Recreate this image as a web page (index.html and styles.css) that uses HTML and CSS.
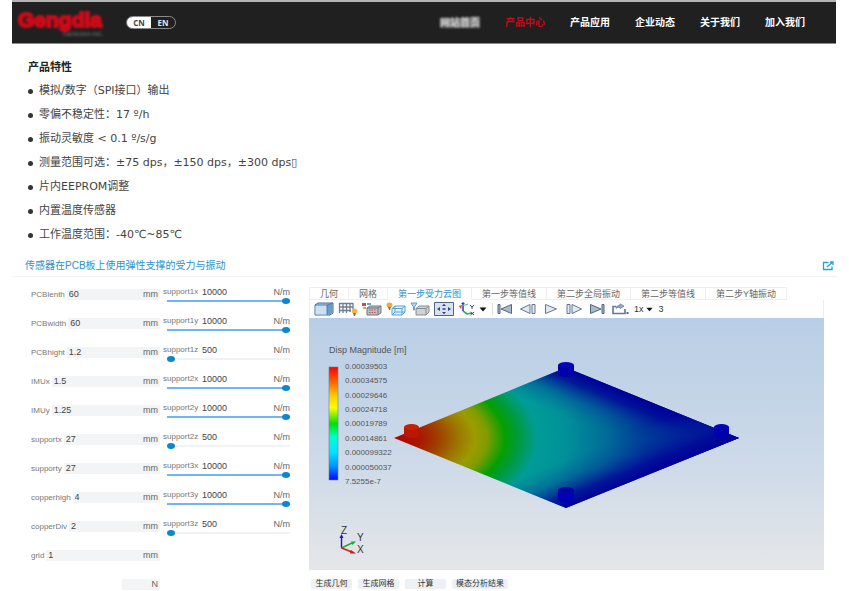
FILE: index.html
```html
<!DOCTYPE html>
<html lang="zh-CN">
<head>
<meta charset="utf-8">
<title>产品中心</title>
<link rel="stylesheet" href="styles.css">
</head>
<body>
<header class="site-header">
  <a class="logo" href="#"><span class="logo-name">Gengdia</span><span class="logo-sub">GENGDIA INC.</span></a>
  <div class="lang">
    <button type="button" class="lang-on">CN</button><button type="button">EN</button>
  </div>
  <nav class="nav">
    <a class="nav-soft" href="#">网站首页</a>
    <a class="nav-active" href="#">产品中心</a>
    <a href="#">产品应用</a>
    <a href="#">企业动态</a>
    <a href="#">关于我们</a>
    <a href="#">加入我们</a>
  </nav>
</header>
<main>
<section class="features">
  <h2>产品特性</h2>
  <ul>
    <li>模拟/数字（SPI接口）输出</li>
    <li>零偏不稳定性：17 º/h</li>
    <li>振动灵敏度 &lt; 0.1 º/s/g</li>
    <li>测量范围可选：±75 dps，±150 dps，±300 dps▯</li>
    <li>片内EEPROM调整</li>
    <li>内置温度传感器</li>
    <li>工作温度范围：-40℃~85℃</li>
  </ul>
</section>

<div class="app-title">
  <h1>传感器在PCB板上使用弹性支撑的受力与振动</h1>
  <a class="open" href="#" aria-label="打开">
    <svg width="12" height="10" viewBox="0 0 12 10" fill="none" stroke="#2b9fd8" stroke-width="1.3"><path d="M6.500 1.500H1.500V8.500H10V5.500M5 6L10.500 1.200M7.800 1H11V4"/></svg>
  </a>
</div>

<div class="workspace">
  <form class="params">
    <div class="sizes">
      <div class="size"><label for="a1">PCBlenth</label><span class="box"><input id="a1" value="60"><span>mm</span></span></div>
      <div class="size"><label for="a2">PCBwidth</label><span class="box"><input id="a2" value="60"><span>mm</span></span></div>
      <div class="size"><label for="a3">PCBhight</label><span class="box"><input id="a3" value="1.2"><span>mm</span></span></div>
      <div class="size"><label for="a4">IMUx</label><span class="box"><input id="a4" value="1.5"><span>mm</span></span></div>
      <div class="size"><label for="a5">IMUy</label><span class="box"><input id="a5" value="1.25"><span>mm</span></span></div>
      <div class="size"><label for="a6">supportx</label><span class="box"><input id="a6" value="27"><span>mm</span></span></div>
      <div class="size"><label for="a7">supporty</label><span class="box"><input id="a7" value="27"><span>mm</span></span></div>
      <div class="size"><label for="a8">copperhigh</label><span class="box"><input id="a8" value="4"><span>mm</span></span></div>
      <div class="size"><label for="a9">copperDiv</label><span class="box"><input id="a9" value="2"><span>mm</span></span></div>
      <div class="size"><label for="a10">grid</label><span class="box"><input id="a10" value="1"><span>mm</span></span></div>
      <div class="size size-short"><span class="box"><input aria-label="N" value=""><span>N</span></span></div>
    </div>
    <div class="springs">
      <div class="spring"><label for="s1">support1x</label><output for="s1">10000</output><span>N/m</span><input id="s1" class="full" type="range" min="500" max="10000" value="10000"></div>
      <div class="spring"><label for="s2">support1y</label><output for="s2">10000</output><span>N/m</span><input id="s2" class="full" type="range" min="500" max="10000" value="10000"></div>
      <div class="spring"><label for="s3">support1z</label><output for="s3">500</output><span>N/m</span><input id="s3" type="range" min="500" max="10000" value="500"></div>
      <div class="spring"><label for="s4">support2x</label><output for="s4">10000</output><span>N/m</span><input id="s4" class="full" type="range" min="500" max="10000" value="10000"></div>
      <div class="spring"><label for="s5">support2y</label><output for="s5">10000</output><span>N/m</span><input id="s5" class="full" type="range" min="500" max="10000" value="10000"></div>
      <div class="spring"><label for="s6">support2z</label><output for="s6">500</output><span>N/m</span><input id="s6" type="range" min="500" max="10000" value="500"></div>
      <div class="spring"><label for="s7">support3x</label><output for="s7">10000</output><span>N/m</span><input id="s7" class="full" type="range" min="500" max="10000" value="10000"></div>
      <div class="spring"><label for="s8">support3y</label><output for="s8">10000</output><span>N/m</span><input id="s8" class="full" type="range" min="500" max="10000" value="10000"></div>
      <div class="spring"><label for="s9">support3z</label><output for="s9">500</output><span>N/m</span><input id="s9" type="range" min="500" max="10000" value="500"></div>
    </div>
  </form>

  <section class="viewer">
    <div class="tabs">
      <button type="button">几何</button>
      <button type="button">网格</button>
      <button type="button" class="tab-on">第一步受力云图</button>
      <button type="button">第一步等值线</button>
      <button type="button">第二步全局振动</button>
      <button type="button">第二步等值线</button>
      <button type="button">第二步Y轴振动</button>
    </div>
    <div class="toolbar">
      <div class="tools">
        <button type="button" aria-label="实体"><svg width="20" height="14" viewBox="0 0 20 14"><path d="M1 3L4 1H19V11L16 13H1Z" fill="#a9cbea" stroke="#456f9e"/><path d="M1.500 3.500H13V12.500H1.500Z" fill="#c9e0f5"/><path d="M13 3L19 1V11L13 13Z" fill="#6f9bc6"/><path d="M13 3V13M1 3H13L19 1" stroke="#456f9e" fill="none" stroke-width=".8"/></svg></button>
        <button type="button" aria-label="网格显示"><svg width="20" height="14" viewBox="0 0 20 14"><path d="M1 1.500H15M1 5H15M1 8.500H13M1.500 1V11M5 1V11M8.500 1V11M12 1V10M15 1V7" stroke="#6f7e90" stroke-width="1.300" fill="none"/><ellipse cx="16.500" cy="9" rx="2.800" ry="2.500" fill="#f3b640"/><path d="M15 11H18L17 14H16Z" fill="#8a6a3a"/></svg></button>
        <button type="button" aria-label="结果设置"><svg width="20" height="14" viewBox="0 0 20 14"><path d="M5 6L8 4H19V11L16 13H5Z" fill="#bcc0c5" stroke="#707780"/><path d="M5 6H16V13M16 6L19 4" fill="none" stroke="#707780"/><path d="M7 8H14M7 10.500H14" stroke="#bb5555" stroke-dasharray="1.500 1"/><path d="M0 1H4V4H0Z" fill="#d14b38"/><path d="M5 1H9V3H5Z" fill="#64a0d6"/><path d="M1 5H4V7H1Z" fill="#e4a23c"/></svg></button>
        <button type="button" aria-label="线框灯光"><svg width="20" height="14" viewBox="0 0 20 14"><path d="M6 6.500L9 4H19V10L16 13H6ZM6 6.500H16V13M16 6.500L19 4M9 4V10H19M9 10L6 13" fill="#e4f2fc" stroke="#56a3d3"/><ellipse cx="3.500" cy="3" rx="3" ry="2.500" fill="#efaa39"/><path d="M2 5H5L4 8H3Z" fill="#8d7048"/></svg></button>
        <button type="button" aria-label="灯光"><svg width="20" height="14" viewBox="0 0 20 14"><path d="M6 6.500L9 4H19V10L16 13H6Z" fill="#cfd3d8" stroke="#858c94"/><path d="M6 6.500H16V13M16 6.500L19 4" fill="none" stroke="#858c94"/><path d="M1 1H7L4.500 5V8H3.500V5Z" fill="#b9d9ee" stroke="#4e8db8" stroke-width=".8"/></svg></button>
        <button type="button" aria-label="适合窗口"><svg width="20" height="14" viewBox="0 0 20 14"><path d="M.5 .5H19.500V13.500H.5Z" fill="#d8e2ef" stroke="#53647d"/><path d="M8 4L10 1.800L12 4ZM8 10L10 12.200L12 10ZM6 5L3 7L6 9ZM14 5L17 7L14 9Z" fill="#2c4a75"/><path d="M8.500 6H11.500V8H8.500Z" fill="#52709a"/></svg></button>
        <button type="button" aria-label="视角"><svg width="20" height="14" viewBox="0 0 20 14"><path d="M5 9L9 12L14 11" fill="none" stroke="#25b34a" stroke-width="1.600"/><path d="M5 9V2" stroke="#2436cc" stroke-width="1.500"/><path d="M3 2L5 0L7 2Z" fill="#2436cc"/><path d="M1 4L4 3L3 7Z" fill="#e63636"/><path d="M4 4L10 2" stroke="#49c46a"/><path d="M12 3L14 5L16 3M14 5V7M12.500 10L16 13M16 10L12.500 13" stroke="#444" fill="none"/></svg></button>
      </div>
      <button type="button" class="caret" aria-label="更多视角"><svg width="8" height="5" viewBox="0 0 8 5"><path d="M.5 .5H7.500L4 4.500Z" fill="#111"/></svg></button>
      <div class="player">
        <button type="button" aria-label="开头"><svg width="18" height="12" viewBox="0 0 18 12"><path d="M2 1.500H4V10.500H2ZM15.500 1.500V10.500L5 6Z" fill="#a9b8ce" stroke="#536581"/></svg></button>
        <button type="button" aria-label="上一帧"><svg width="18" height="12" viewBox="0 0 18 12"><path d="M11 1.500V10.500L1.500 6ZM13 1.500H16V10.500H13Z" fill="#e3e9f2" stroke="#66768f"/></svg></button>
        <button type="button" aria-label="播放"><svg width="18" height="12" viewBox="0 0 18 12"><path d="M3.500 1.500V10.500L14.500 6Z" fill="#e3e9f2" stroke="#66768f"/></svg></button>
        <button type="button" aria-label="下一帧"><svg width="18" height="12" viewBox="0 0 18 12"><path d="M7 1.500V10.500L16.500 6ZM2 1.500H5V10.500H2Z" fill="#e3e9f2" stroke="#66768f"/></svg></button>
        <button type="button" aria-label="结尾"><svg width="18" height="12" viewBox="0 0 18 12"><path d="M14 1.500H16V10.500H14ZM2.500 1.500V10.500L13 6Z" fill="#a9b8ce" stroke="#536581"/></svg></button>
        <button type="button" aria-label="循环"><svg width="18" height="12" viewBox="0 0 18 12"><path d="M5 3.500H2V10.500H14V6" fill="none" stroke="#61779b" stroke-width="1.600"/><path d="M5 5.500C5 3 7 2.500 9 2.500V.8L13 3.200L9 5.500V4.200C7.500 4.200 6 4.200 5 5.500Z" fill="#9db1cf" stroke="#61779b" stroke-width=".8"/><path d="M15.500 9H17.500V11H15.500Z" fill="#536581"/></svg></button>
      </div>
      <button type="button" class="speed">1x<svg width="7" height="5" viewBox="0 0 8 5"><path d="M.5 .5H7.500L4 4.500Z" fill="#111"/></svg></button>
      <span class="frame">3</span>
    </div>
    <svg class="scene" viewBox="0 0 515 252" role="img" aria-label="Disp Magnitude">
      <defs>
        <linearGradient id="sky" x2="0" y2="1"><stop stop-color="#b9cee6"/><stop offset=".5" stop-color="#cad8e8"/><stop offset="1" stop-color="#e5e6e9"/></linearGradient>
        <linearGradient id="scale" x2="0" y2="1"><stop stop-color="#f00"/><stop offset=".1" stop-color="#ff4a00"/><stop offset=".25" stop-color="#ffc800"/><stop offset=".36" stop-color="#ff0"/><stop offset=".5" stop-color="#00e000"/><stop offset=".62" stop-color="#00ffd0"/><stop offset=".75" stop-color="#00e5ff"/><stop offset=".88" stop-color="#0090ff"/><stop offset="1" stop-color="#0008ff"/></linearGradient>
        <radialGradient id="field" gradientUnits="userSpaceOnUse" cx="0" cy="0" r="300" gradientTransform="translate(85 120) scale(1 .58)">
          <stop offset="0" stop-color="#b40000"/><stop offset=".09" stop-color="#a81800"/><stop offset=".15" stop-color="#a04000"/><stop offset=".22" stop-color="#9c7a00"/><stop offset=".27" stop-color="#9c9c00"/><stop offset=".31" stop-color="#809c00"/><stop offset=".37" stop-color="#04a000"/><stop offset=".41" stop-color="#009a38"/><stop offset=".48" stop-color="#009c98"/><stop offset=".58" stop-color="#009098"/><stop offset=".72" stop-color="#006898"/><stop offset=".84" stop-color="#003498"/><stop offset=".95" stop-color="#000898"/><stop offset="1" stop-color="#000098"/>
        </radialGradient>
        <linearGradient id="edgeTop" gradientUnits="userSpaceOnUse" x1="257" y1="50" x2="240" y2="92"><stop stop-color="#000098"/><stop offset=".25" stop-color="#000c98" stop-opacity=".85"/><stop offset=".6" stop-color="#003898" stop-opacity=".35"/><stop offset="1" stop-color="#006098" stop-opacity="0"/></linearGradient>
        <linearGradient id="edgeBottom" gradientUnits="userSpaceOnUse" x1="257" y1="190" x2="240" y2="148"><stop stop-color="#000098"/><stop offset=".25" stop-color="#000c98" stop-opacity=".85"/><stop offset=".6" stop-color="#003898" stop-opacity=".35"/><stop offset="1" stop-color="#006098" stop-opacity="0"/></linearGradient>
        <path id="plate" d="M85 120L257 49.500L430 120L257 190Z"/>
      </defs>
      <rect width="515" height="252" fill="url(#sky)"/>
      <text class="legend-title" x="20" y="35">Disp Magnitude [m]</text>
      <rect x="20" y="49" width="9" height="113" fill="url(#scale)" stroke="#6d7f8f" stroke-width=".6"/>
      <g class="legend">
        <text x="36" y="51">0.00039503</text><text x="36" y="65">0.00034575</text><text x="36" y="80">0.00029646</text><text x="36" y="94">0.00024718</text><text x="36" y="108">0.00019789</text><text x="36" y="123">0.00014861</text><text x="36" y="137">0.000099322</text><text x="36" y="152">0.000050037</text><text x="36" y="166">7.5255e-7</text>
      </g>
      <use href="#plate" fill="url(#field)"/><use href="#plate" fill="url(#edgeTop)"/><use href="#plate" fill="url(#edgeBottom)"/>
      <path d="M95 109V118A8 3 0 0 0 110 118V109Z" fill="#b81800"/><ellipse cx="102.500" cy="109" rx="7.500" ry="3" fill="#c82000"/>
      <path d="M249 47V56A8 3 0 0 0 265 56V47Z" fill="#0000a8"/><ellipse cx="257" cy="47" rx="8" ry="3" fill="#0408b4"/>
      <path d="M405 109V118A8 3 0 0 0 420 118V109Z" fill="#0000b0"/><ellipse cx="412.500" cy="109" rx="7.500" ry="3" fill="#0206b4"/>
      <path d="M249 172V182A8 3 0 0 0 265 182V172Z" fill="#0000b4"/><ellipse cx="257" cy="172" rx="8" ry="3" fill="#0206a0"/>
      <g fill="none" stroke-width="1.400"><path d="M32.500 230V219" stroke="#1818b8"/><path d="M32.500 230L43 225" stroke="#22a832"/><path d="M32.500 230L43 234" stroke="#d01818"/></g>
      <path d="M30.500 220L32.500 216L34.500 220Z" fill="#1818b8"/><path d="M42 223.500L47 223.500L43.500 227Z" fill="#22a832"/><path d="M42 232L47 235.500L41 235.500Z" fill="#d01818"/>
      <g class="axes"><text x="32" y="216">Z</text><text x="48" y="223">Y</text><text x="48" y="235">X</text></g>
    </svg>
    <div class="actions">
      <button type="button">生成几何</button>
      <button type="button">生成网格</button>
      <button type="button">计算</button>
      <button type="button">模态分析结果</button>
    </div>
  </section>
</div>
</main>
</body>
</html>
```
FILE: styles.css
```css
* { box-sizing: border-box; }
body { margin: 0; background: #fff; color: #444; font-family: "Liberation Sans", "Noto Sans CJK SC", sans-serif; }
h1, h2, ul { margin: 0; padding: 0; }
button, input { margin: 0; padding: 0; border: 0; background: none; color: inherit; font: inherit; border-radius: 0; }
a { color: inherit; text-decoration: none; }
svg { display: block; }

.site-header { display: flex; align-items: center; height: 44px; margin: 0 13px 0 12px; padding: 0 31px 0 6px; background: #202020; border-top: 2px solid #b4b4b4; border-bottom: 1px solid #8a8a8a; }
.logo { display: flex; flex-direction: column; width: 86px; filter: blur(1px); }
.logo-name { color: #cf0a18; font-size: 21px; line-height: 22px; font-weight: bold; -webkit-text-stroke: 2px #cf0a18; }
.logo-sub { align-self: flex-end; color: #777; font-size: 6px; line-height: 6px; }
.lang { display: flex; width: 50px; height: 13px; margin-left: 22px; overflow: hidden; border: 1px solid #8a8a8a; border-radius: 7px; color: #e4e4e4; font: bold 8px/11px "Open Sans", sans-serif; }
.lang button { flex: 1; }
.lang .lang-on { background: #fff; color: #444; }
.nav { display: flex; gap: 25px; margin-left: auto; color: #fff; font-size: 10px; line-height: 14px; font-weight: bold; }
.nav .nav-active { color: #c50918; }
.nav .nav-soft { align-self: center; color: #ddd; background: #666; line-height: 10px; filter: blur(1px); }

.features { padding: 12px 28px 0; font-family: "DejaVu Sans", "Noto Sans CJK SC", sans-serif; font-size: 11px; }
.features h2 { color: #222; font-size: 11px; line-height: 23px; }
.features ul { list-style: none; }
.features li { display: flex; align-items: center; gap: 6px; line-height: 24px; white-space: pre; }
.features li::before { content: ""; width: 5px; height: 5px; border-radius: 50%; background: #333; }

.app-title { display: flex; align-items: center; justify-content: space-between; height: 21px; margin: 9px 12px 0; padding: 0 3px 0 13px; border-bottom: 1px solid #f2f2f2; color: #2b92cc; }
.app-title h1 { font-size: 10px; line-height: 14px; font-weight: normal; }

.workspace { display: grid; grid-template-columns: minmax(0, 259fr) minmax(0, 515fr); gap: 19px; align-items: start; padding: 10px 25px 0 31px; }
.params { display: grid; grid-template-columns: minmax(0, 129fr) minmax(0, 127fr); gap: 3px; color: #666; font-size: 9px; }
.params label { color: #777; font-size: 8px; }
.sizes { display: grid; grid-template-columns: minmax(0, 1fr); gap: 18px; padding-top: 2px; }
.size { display: flex; gap: 2px; height: 11px; line-height: 11px; }
.box { display: flex; flex: 1; min-width: 0; padding: 0 2px; background: #f3f4f5; }
.box input { flex: 1; width: 0; min-width: 0; color: #444; }
.size-short { justify-content: flex-end; }
.size-short .box { flex: 0 0 38px; }
.springs { display: grid; grid-template-columns: minmax(0, 1fr); gap: 12px; align-content: start; }
.spring { display: grid; grid-template-columns: 39px 1fr auto; line-height: 10px; }
.spring output { color: #444; }
.spring input { grid-column: 1 / -1; margin-left: 4px; height: 7px; appearance: none; min-width: 0; }
.spring input::-webkit-slider-runnable-track { height: 2px; background: #f0f3f6; }
.spring .full::-webkit-slider-runnable-track { background: #72b5f5; }
.spring input::-webkit-slider-thumb { appearance: none; width: 8px; height: 6px; margin-top: -2px; border-radius: 50%; background: #0b86cf; }

.tabs { display: flex; height: 13px; border-left: 1px solid #eee; color: #666; font-size: 9px; line-height: 12px; }
.tabs button { padding: 0 10px; border: solid #eee; border-width: 1px 1px 1px 0; white-space: nowrap; }
.tabs .tab-on { border-bottom-color: #fff; color: #2b92cc; }
.toolbar { display: flex; align-items: center; height: 18px; padding-left: 4px; border: solid #eee; border-width: 0 1px; color: #333; font-size: 9px; }
.tools { display: flex; gap: 4px; }
.caret { margin-left: 1px; }
.player { display: flex; gap: 5px; margin-left: 5px; padding-left: 3px; border-left: 1px solid #ddd; }
.speed { display: flex; align-items: center; gap: 2px; margin-left: 5px; }
.frame { margin-left: 6px; }
.scene { width: 100%; height: auto; }
.scene text { font-family: "Liberation Sans", sans-serif; fill: #555; }
.scene .legend-title { font-size: 9px; }
.scene .legend text { font-size: 8px; }
.scene .axes text { font-size: 10px; fill: #333; }
.actions { display: flex; gap: 6px; margin-top: 9px; padding-left: 2px; }
.actions button { min-width: 41px; height: 10px; padding: 0 4px; border-radius: 2px; background: #edf1f5; color: #333; font-size: 8px; line-height: 10px; }
```
